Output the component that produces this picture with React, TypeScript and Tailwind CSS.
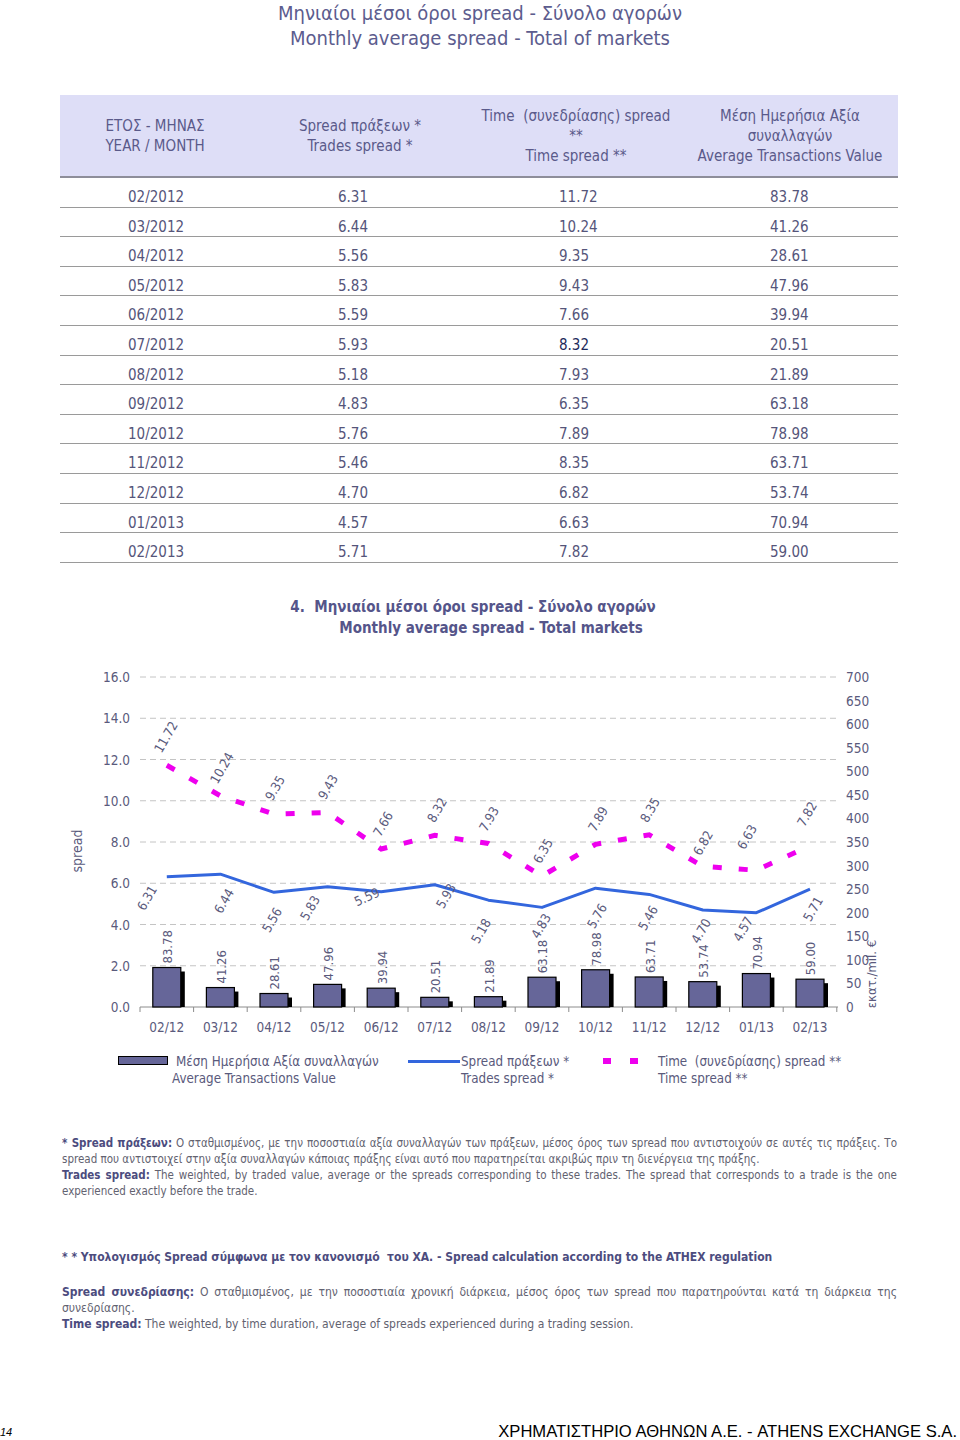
import React from "react";

const FONT = '"DejaVu Sans Condensed", "DejaVu Sans", "Noto Sans", sans-serif';

const rows = [
  ["02/2012", "6.31", "11.72", "83.78"],
  ["03/2012", "6.44", "10.24", "41.26"],
  ["04/2012", "5.56", "9.35", "28.61"],
  ["05/2012", "5.83", "9.43", "47.96"],
  ["06/2012", "5.59", "7.66", "39.94"],
  ["07/2012", "5.93", "8.32", "20.51"],
  ["08/2012", "5.18", "7.93", "21.89"],
  ["09/2012", "4.83", "6.35", "63.18"],
  ["10/2012", "5.76", "7.89", "78.98"],
  ["11/2012", "5.46", "8.35", "63.71"],
  ["12/2012", "4.70", "6.82", "53.74"],
  ["01/2013", "4.57", "6.63", "70.94"],
  ["02/2013", "5.71", "7.82", "59.00"],
];

const months = ["02/12", "03/12", "04/12", "05/12", "06/12", "07/12", "08/12", "09/12", "10/12", "11/12", "12/12", "01/13", "02/13"];

// label centers read from the reference
const timeLbl: [number, number][] = [
  [166, 736], [222, 767], [275, 787], [328, 786], [383, 823], [437, 809], [489, 818],
  [543, 850], [598, 818], [650, 809], [703, 842], [747, 836], [807, 813],
];
const tradeLbl: [number, number, number][] = [
  [147, 897, -60], [224, 900, -60], [272, 919, -60], [310, 907, -60], [367, 896, -25], [446, 895, -60], [481, 930, -60],
  [541, 925, -60], [597, 915, -60], [648, 917, -60], [701, 930, -60], [743, 928, -60], [813, 908, -60],
];

const X0 = 140;
const CW = 53.6;
const YB = 1006;
const cx = (i: number) => X0 + CW * (i + 0.5);
const yL = (v: number) => YB - v * 20.625;
const yR = (v: number) => YB - (v * 330) / 700;

function Chart() {
  const trades = rows.map((r) => parseFloat(r[1]));
  const times = rows.map((r) => parseFloat(r[2]));
  const vals = rows.map((r) => parseFloat(r[3]));
  const tc = "#5a5a7c";
  const tradePts = trades.map((v, i) => `${cx(i)},${yL(v)}`).join(" ");
  const timePts = times.map((v, i) => `${cx(i)},${yL(v)}`).join(" ");
  return (
    <svg width={960} height={400} viewBox="0 650 960 400" style={{ fontFamily: FONT }} className="block">
      {/* gridlines */}
      {[2, 4, 6, 8, 10, 12, 14, 16].map((v) => (
        <line key={v} x1={X0} x2={838} y1={yL(v)} y2={yL(v)} stroke="#c4c4c4" strokeWidth={1} strokeDasharray="6 4" />
      ))}
      {/* left axis labels */}
      {[0, 2, 4, 6, 8, 10, 12, 14, 16].map((v) => (
        <text key={v} x={130} y={yL(v)} textAnchor="end" dominantBaseline="central" fontSize={13.5} fill={tc}>
          {v.toFixed(1)}
        </text>
      ))}
      {/* right axis labels */}
      {Array.from({ length: 15 }, (_, k) => k * 50).map((v) => (
        <text key={v} x={846} y={yR(v)} textAnchor="start" dominantBaseline="central" fontSize={13.5} fill={tc}>
          {v}
        </text>
      ))}
      <text x={77} y={850} transform="rotate(-90 77 850)" textAnchor="middle" dominantBaseline="central" fontSize={14} fill={tc}>
        spread
      </text>
      <text x={871} y={973} transform="rotate(-90 871 973)" textAnchor="middle" dominantBaseline="central" fontSize={13} fill={tc}>
        εκατ./mil. €
      </text>
      {/* x axis */}
      <line x1={X0} x2={838} y1={YB} y2={YB} stroke="#8c8c8c" strokeWidth={1} />
      {Array.from({ length: 14 }, (_, k) => (
        <line key={k} x1={X0 + CW * k} x2={X0 + CW * k} y1={YB} y2={YB + 5} stroke="#8c8c8c" strokeWidth={1} />
      ))}
      {months.map((m, i) => (
        <text key={m} x={cx(i)} y={1026} textAnchor="middle" dominantBaseline="central" fontSize={13.5} fill={tc}>
          {m}
        </text>
      ))}
      {/* bars */}
      {vals.map((v, i) => {
        const top = yR(v);
        const x = cx(i) - 14;
        return (
          <g key={i}>
            <rect x={x + 4} y={top + 4} width={28} height={YB - top - 4} fill="#000" />
            <rect x={x} y={top} width={28} height={YB - top} fill="#666699" stroke="#000" strokeWidth={1.2} />
            <text
              x={cx(i) + 1}
              y={top - 4}
              transform={`rotate(-90 ${cx(i) + 1} ${top - 4})`}
              textAnchor="start"
              dominantBaseline="central"
              fontSize={13}
              fill={tc}
            >
              {rows[i][3]}
            </text>
          </g>
        );
      })}
      {/* lines */}
      <polyline points={tradePts} fill="none" stroke="#3366dd" strokeWidth={3} strokeLinejoin="round" />
      <polyline points={timePts} fill="none" stroke="#ee00ee" strokeWidth={5} strokeDasharray="9 17" />
      {timeLbl.map(([x, y], i) => (
        <text key={i} x={x} y={y} transform={`rotate(-60 ${x} ${y})`} textAnchor="middle" dominantBaseline="central" fontSize={13} fill={tc}>
          {rows[i][2]}
        </text>
      ))}
      {tradeLbl.map(([x, y, a], i) => (
        <text key={i} x={x} y={y} transform={`rotate(${a} ${x} ${y})`} textAnchor="middle" dominantBaseline="central" fontSize={13} fill={tc}>
          {rows[i][1]}
        </text>
      ))}
    </svg>
  );
}

export default function App() {
  return (
    <div className="relative w-[960px] h-[1440px] bg-white overflow-hidden" style={{ fontFamily: FONT }}>
      {/* Title */}
      <div className="text-center text-[20px] leading-[25px] text-[#5c5c8e] pt-[1px]">
        <div>Μηνιαίοι μέσοι όροι spread - Σύνολο αγορών</div>
        <div>Monthly average spread - Total of markets</div>
      </div>

      {/* Table */}
      <div className="ml-[60px] w-[838px] mt-[44px] text-[#55557a]">
        <div className="grid grid-cols-[210px_210px_210px_208px] h-[83px] bg-[#dedef7] border-b-2 border-[#8e8e9a] items-center text-[15px] leading-[20px] text-[#5a5a8a] whitespace-nowrap">
          <div className="text-center pr-[20px]">
            <div>ΕΤΟΣ - ΜΗΝΑΣ</div>
            <div>YEAR / MONTH</div>
          </div>
          <div className="text-center pr-[30px]">
            <div>Spread πράξεων *</div>
            <div>Trades spread *</div>
          </div>
          <div className="text-center pr-[18px]">
            <div>Time&nbsp; (συνεδρίασης) spread</div>
            <div>**</div>
            <div>Time spread **</div>
          </div>
          <div className="text-center pr-[8px]">
            <div>Μέση Ημερήσια Αξία</div>
            <div>συναλλαγών</div>
            <div>Average Transactions Value</div>
          </div>
        </div>
        {rows.map((r, idx) => (
          <div key={r[0]} className="grid grid-cols-[210px_210px_210px_208px] h-[29.6px] pt-[10px] border-b border-[#9a9a9a] text-[15px] leading-[18px]">
            <div className="pl-[68px]">{r[0]}</div>
            <div className="pl-[68px]">{r[1]}</div>
            <div className={idx === 5 ? "pl-[79px] text-[#1e2a5a]" : "pl-[79px]"}>{r[2]}</div>
            <div className="pl-[80px]">{r[3]}</div>
          </div>
        ))}
      </div>

      {/* Chart title */}
      <div className="mt-[34px] pr-[14px] text-center font-bold text-[15px] leading-[21px] text-[#55558a]">
        <div>4.&nbsp; Μηνιαίοι μέσοι όροι spread - Σύνολο αγορών</div>
        <div className="pl-[36px]">Monthly average spread - Total markets</div>
      </div>

      {/* Chart */}
      <div className="mt-[12px]">
        <Chart />
      </div>

      {/* Legend */}
      <div className="mt-[2px] flex pl-[118px] text-[13.3px] leading-[17px] text-[#5a5a7c]">
        <div className="w-[290px] flex items-start">
          <div className="mt-[3px] w-[50px] h-[9px] bg-[#666699] border border-black shrink-0" />
          <div className="ml-[4px]">
            <div className="pl-[4px]">Μέση Ημερήσια Αξία συναλλαγών</div>
            <div>Average Transactions Value</div>
          </div>
        </div>
        <div className="w-[195px] flex items-start">
          <div className="mt-[7px] w-[52px] h-[3px] bg-[#3366dd] shrink-0" />
          <div className="ml-[1px]">
            <div>Spread πράξεων *</div>
            <div>Trades spread *</div>
          </div>
        </div>
        <div className="flex items-start">
          <div className="mt-[5px] w-[8px] h-[6px] bg-[#ee00ee] shrink-0" />
          <div className="mt-[5px] ml-[19px] w-[8px] h-[6px] bg-[#ee00ee] shrink-0" />
          <div className="ml-[20px]">
            <div>Time&nbsp; (συνεδρίασης) spread **</div>
            <div>Time spread **</div>
          </div>
        </div>
      </div>

      {/* Footnotes */}
      <div className="ml-[62px] w-[835px] mt-[48px] text-[11.5px] leading-[16px] text-[#626270] text-justify">
        <p>
          <b className="text-[#4c4c7e]">* Spread πράξεων:</b> Ο σταθμισμένος, με την ποσοστιαία αξία συναλλαγών των πράξεων, μέσος όρος των spread που αντιστοιχούν σε αυτές τις πράξεις. Το spread που αντιστοιχεί στην αξία συναλλαγών κάποιας πράξης είναι αυτό που παρατηρείται ακριβώς πριν τη διενέργεια της πράξης.
        </p>
        <p>
          <b className="text-[#4c4c7e]">Trades spread:</b> The weighted, by traded value, average or the spreads corresponding to these trades. The spread that corresponds to a trade is the one experienced exactly before the trade.
        </p>
      </div>

      <div className="ml-[62px] w-[835px] mt-[50px] text-[12px] leading-[16px] font-bold text-[#4c4c7e]">
        * * Υπολογισμός Spread σύμφωνα με τον κανονισμό&nbsp; του ΧΑ. - Spread calculation according to the ATHEX regulation
      </div>

      <div className="ml-[62px] w-[835px] mt-[19px] text-[12px] leading-[16px] text-[#626270] text-justify">
        <p>
          <b className="text-[#4c4c7e]">Spread συνεδρίασης:</b> Ο σταθμισμένος, με την ποσοστιαία χρονική διάρκεια, μέσος όρος των spread που παρατηρούνται κατά τη διάρκεια της συνεδρίασης.
        </p>
        <p>
          <b className="text-[#4c4c7e]">Time spread:</b> The weighted, by time duration, average of spreads experienced during a trading session.
        </p>
      </div>

      {/* Footer */}
      <div className="absolute left-0 right-0 bottom-0 h-[16px] flex items-center justify-between" style={{ fontFamily: '"Liberation Sans", Arial, sans-serif' }}>
        <span className="italic text-[11px] text-black">14</span>
        <span className="text-[16.6px] text-black pr-[3px]">ΧΡΗΜΑΤΙΣΤΗΡΙΟ ΑΘΗΝΩΝ Α.Ε. - ATHENS EXCHANGE S.A.</span>
      </div>
    </div>
  );
}
